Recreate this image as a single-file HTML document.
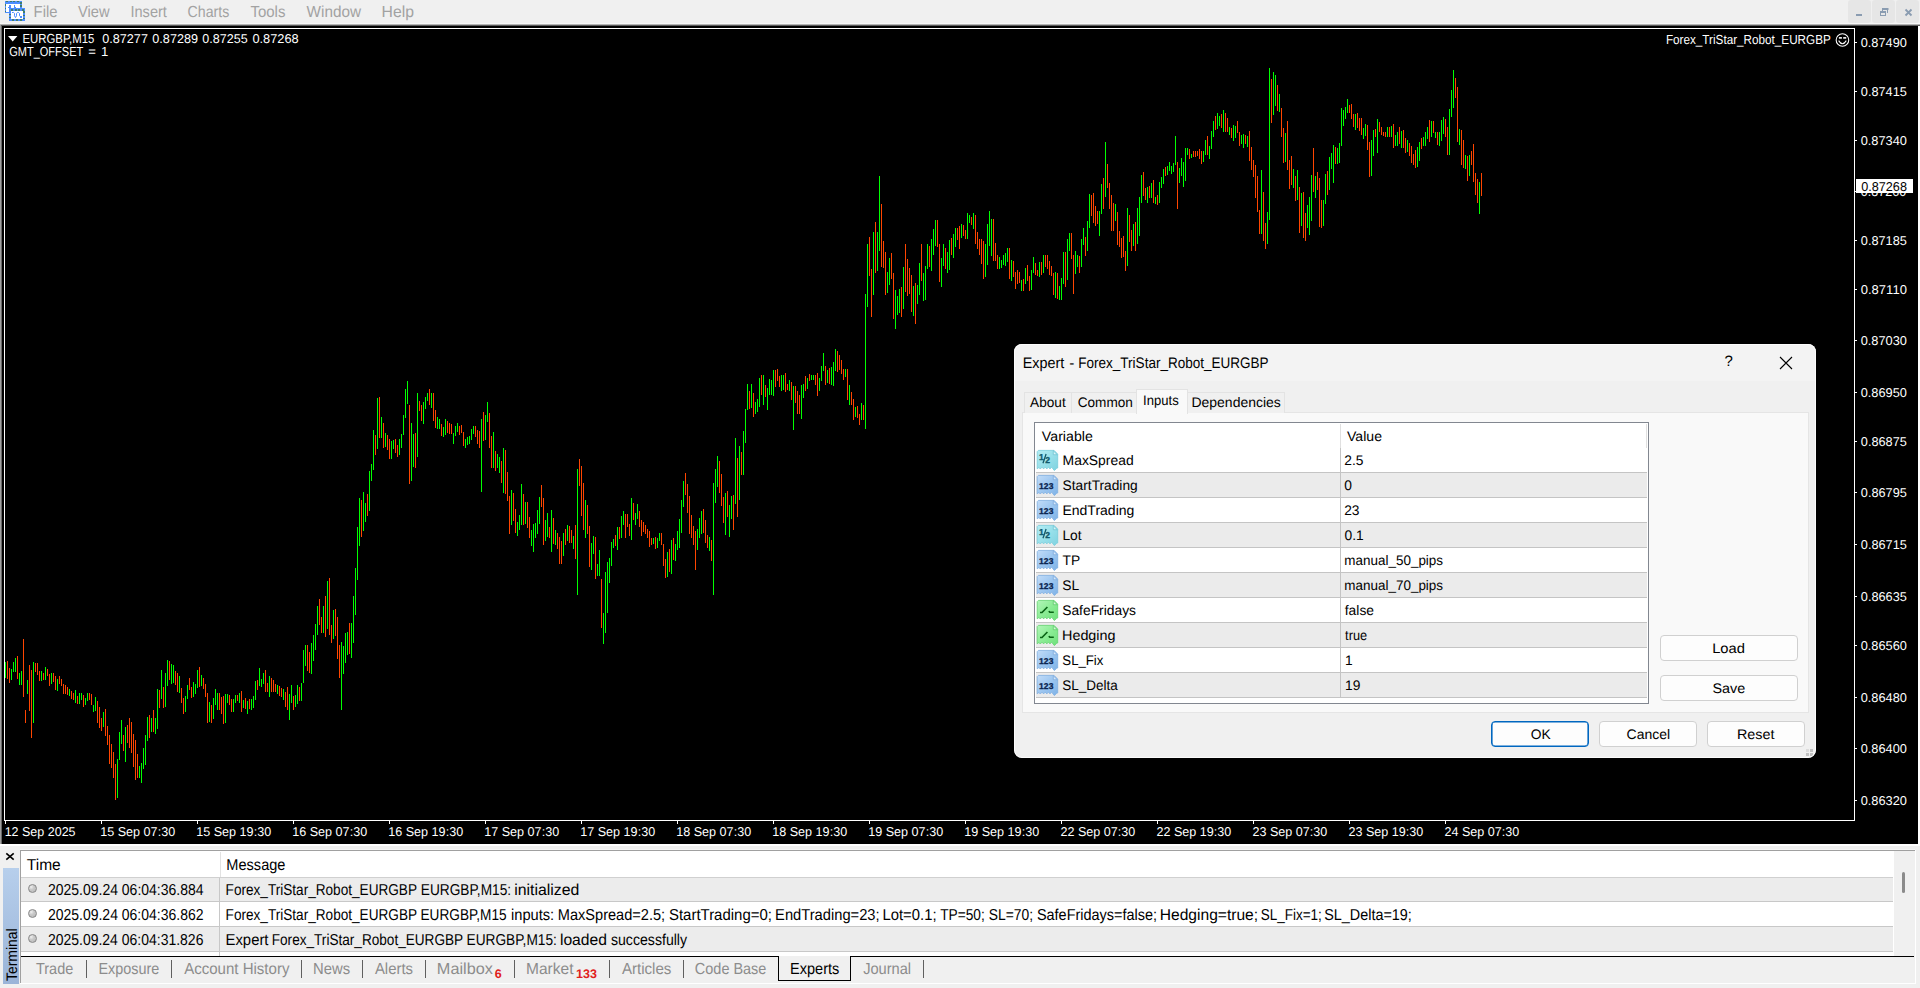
<!DOCTYPE html>
<html><head><meta charset="utf-8"><title>MetaTrader 4</title>
<style>
*{box-sizing:border-box;margin:0;padding:0}
html,body{width:1920px;height:988px;overflow:hidden;background:#f0f0f0;font-family:"Liberation Sans",sans-serif;text-rendering:geometricPrecision}
.a{position:absolute;white-space:nowrap}
#menubar{left:0;top:0;width:1920px;height:23px;background:#f0f0f0}
.mi{top:1.5px;height:20px;line-height:20px;font-size:16px;color:#a2a2a2}
.wc{top:0;width:23px;height:23px;background:#e6e6e6}
#chartbg{left:2px;top:26px;width:1916px;height:818px;background:#000}
#frame{left:4px;top:28px;width:1851px;height:793px;border:1px solid #fff}
.ct{color:#fff;font-size:13.1px;line-height:14px}
.cd{font-size:12.8px}
.pl{left:1861px;color:#fff;font-size:12.8px;line-height:14px}
.tick{left:1855px;width:2px;height:1px;background:#fff}
.tl{top:824.57px;color:#fff;font-size:12.8px;line-height:14px}
.tt{top:821px;width:1px;height:3px;background:#fff}
/* terminal */
#term{left:20px;top:850px;width:1895px;height:106px;background:#fff;border-top:1px solid #a0a0a0;border-left:1px solid #a0a0a0}
.trow{left:21px;width:1872px;height:25px;border-bottom:1px solid #c8c8c8}
.tx{font-size:15.8px;line-height:24px;color:#000;height:24px}
.tab{top:958.55px;height:20px;line-height:20px;font-size:16px;color:#8c8c8c}
.tsep{top:960px;width:1px;height:18px;background:#606060}
/* dialog */
#dlg{left:1014px;top:344px;width:802px;height:414px;background:#f0f0f0;border-radius:8px;overflow:hidden}
#dlgtitle{left:0;top:0;width:802px;height:37px;background:#f3f3f3}
.dt{font-size:14px;color:#000;line-height:16px}
.dtab{top:48px;height:21px;background:#f0f0f0;border:1px solid #e3e3e3;border-bottom:none;font-size:14px;line-height:19px;text-align:center}
.btn{height:26px;border:1px solid #d0d0d0;border-radius:4px;background:#fdfdfd;font-size:14px;line-height:24px;text-align:center;color:#000}
.row{left:22px;width:611px;height:25px;border-bottom:1px solid #c4c4c4}
.rowg{background:#ebebeb}
.rt{font-size:13.8px;line-height:16px;color:#000}
.rw{font-size:13.8px}
</style></head><body>
<style>#m1{transform-origin:0 0;transform:translate(-0.38px,1.10px) scaleX(0.9238)}
#m2{transform-origin:0 0;transform:translate(-0.03px,1.10px) scaleX(0.9166)}
#m3{transform-origin:0 0;transform:translate(-0.52px,1.10px) scaleX(0.9098)}
#m4{transform-origin:0 0;transform:translate(-0.40px,1.10px) scaleX(0.8835)}
#m5{transform-origin:0 0;transform:translate(0.42px,1.10px) scaleX(0.9356)}
#m6{transform-origin:0 0;transform:translate(0.61px,1.10px) scaleX(0.9554)}
#m7{transform-origin:0 0;transform:translate(-0.50px,1.10px) scaleX(0.9854)}
#c3{transform-origin:0 0;transform:translate(-1.11px,0.30px) scaleX(0.8945)}
#th1{transform-origin:0 0;transform:translate(-0.21px,0.90px) scaleX(0.9836)}
#th2{transform-origin:0 0;transform:translate(-0.67px,0.90px) scaleX(0.9221)}
#r1a{transform-origin:0 0;transform:translate(-0.08px,1.80px) scaleX(0.8856)}
#r2a{transform-origin:0 0;transform:translate(-0.08px,1.80px) scaleX(0.8855)}
#r3a{transform-origin:0 0;transform:translate(-0.08px,1.80px) scaleX(0.8851)}
#t1{transform-origin:0 0;transform:translate(-0.01px,1.10px) scaleX(0.9040)}
#t2{transform-origin:0 0;transform:translate(-0.56px,1.10px) scaleX(0.8993)}
#t3{transform-origin:0 0;transform:translate(0.14px,1.10px) scaleX(0.9395)}
#t4{transform-origin:0 0;transform:translate(-0.88px,1.10px) scaleX(0.9248)}
#t5{transform-origin:0 0;transform:translate(-0.08px,1.10px) scaleX(0.9307)}
#t6{transform-origin:0 0;transform:translate(-1.13px,1.10px) scaleX(1.0144)}
#t6n{transform-origin:0 0;transform:translate(-0.15px,1.10px) scaleX(1.0000)}
#t7{transform-origin:0 0;transform:translate(-0.94px,1.10px) scaleX(0.9694)}
#t7n{transform-origin:0 0;transform:translate(-0.89px,1.10px) scaleX(1.0000)}
#t8{transform-origin:0 0;transform:translate(-0.06px,1.10px) scaleX(0.9430)}
#t9{transform-origin:0 0;transform:translate(-1.14px,1.10px) scaleX(0.9036)}
#t10{transform-origin:0 0;transform:translate(-0.93px,1.10px) scaleX(0.9071)}
#t11{transform-origin:0 0;transform:translate(-0.86px,1.10px) scaleX(0.9140)}
#dt1{transform-origin:0 0;transform:translate(0.07px,0.60px) scaleX(0.9894)}
#dt2{transform-origin:0 0;transform:translate(-0.31px,0.60px) scaleX(0.9857)}
#dt3{transform-origin:0 0;transform:translate(-0.91px,0.60px) scaleX(0.9465)}
#dt4{transform-origin:0 0;transform:translate(-0.54px,0.60px) scaleX(1.0126)}
#lh1{transform-origin:0 0;transform:translate(-0.17px,1.10px) scaleX(1.0288)}
#lh2{transform-origin:0 0;transform:translate(-0.01px,1.10px) scaleX(1.0206)}
#b1{transform-origin:0 0;transform:translate(-0.83px,0.75px) scaleX(1.0681)}
#b2{transform-origin:0 0;transform:translate(-0.59px,0.75px) scaleX(1.0428)}
#b3{transform-origin:0 0;transform:translate(-0.32px,0.75px) scaleX(1.0000)}
#b4{transform-origin:0 0;transform:translate(-0.44px,0.75px) scaleX(1.0151)}
#b5{transform-origin:0 0;transform:translate(-1.12px,0.75px) scaleX(1.0423)}
#rn0{transform-origin:0 0;transform:translate(-0.39px,0.80px) scaleX(1.0063)}
#rn1{transform-origin:0 0;transform:translate(-0.39px,0.80px) scaleX(0.9959)}
#rn2{transform-origin:0 0;transform:translate(-0.58px,0.80px) scaleX(1.0158)}
#rn3{transform-origin:0 0;transform:translate(-0.60px,0.80px) scaleX(1.0000)}
#rn4{transform-origin:0 0;transform:translate(-0.45px,0.80px) scaleX(1.0000)}
#rn5{transform-origin:0 0;transform:translate(-0.73px,0.80px) scaleX(1.0000)}
#rn6{transform-origin:0 0;transform:translate(-0.80px,0.80px) scaleX(1.0029)}
#rn7{transform-origin:0 0;transform:translate(-0.98px,0.80px) scaleX(1.0412)}
#rn8{transform-origin:0 0;transform:translate(-0.66px,0.80px) scaleX(0.9559)}
#rn9{transform-origin:0 0;transform:translate(-0.75px,0.80px) scaleX(0.9785)}
#rv0{transform-origin:0 0;transform:translate(-0.75px,0.80px) scaleX(1.0000)}
#rv1{transform-origin:0 0;transform:translate(-0.65px,0.80px) scaleX(1.0000)}
#rv2{transform-origin:0 0;transform:translate(-0.86px,0.80px) scaleX(1.0000)}
#rv3{transform-origin:0 0;transform:translate(-0.46px,0.80px) scaleX(1.0000)}
#rv4{transform-origin:0 0;transform:translate(-0.63px,0.80px) scaleX(0.9746)}
#rv5{transform-origin:0 0;transform:translate(-0.63px,0.80px) scaleX(0.9746)}
#rv6{transform-origin:0 0;transform:translate(-0.24px,0.80px) scaleX(1.0036)}
#rv7{transform-origin:0 0;transform:translate(0.11px,0.80px) scaleX(0.9256)}
#rv8{transform-origin:0 0;transform:translate(0.11px,0.80px) scaleX(1.0000)}
#rv9{transform-origin:0 0;transform:translate(0.11px,0.80px) scaleX(1.0000)}
#p0{transform-origin:0 0;transform:translate(-0.30px,0.00px) scaleX(0.9992)}
#p1{transform-origin:0 0;transform:translate(-0.19px,0.00px) scaleX(0.9958)}
#p2{transform-origin:0 0;transform:translate(-0.35px,0.00px) scaleX(1.0005)}
#p3{transform-origin:0 0;transform:translate(-0.13px,0.00px) scaleX(0.9782)}
#p4{transform-origin:0 0;transform:translate(-0.19px,0.00px) scaleX(0.9958)}
#p5{transform-origin:0 0;transform:translate(-0.24px,0.00px) scaleX(1.0179)}
#p6{transform-origin:0 0;transform:translate(-0.35px,0.00px) scaleX(1.0005)}
#p7{transform-origin:0 0;transform:translate(-0.30px,0.00px) scaleX(0.9991)}
#p8{transform-origin:0 0;transform:translate(-0.16px,0.00px) scaleX(0.9945)}
#p9{transform-origin:0 0;transform:translate(-0.16px,0.00px) scaleX(0.9946)}
#p10{transform-origin:0 0;transform:translate(-0.19px,0.00px) scaleX(0.9958)}
#p11{transform-origin:0 0;transform:translate(-0.19px,0.00px) scaleX(0.9958)}
#p12{transform-origin:0 0;transform:translate(-0.30px,0.00px) scaleX(0.9991)}
#p13{transform-origin:0 0;transform:translate(-0.30px,0.00px) scaleX(0.9992)}
#p14{transform-origin:0 0;transform:translate(-0.30px,0.00px) scaleX(0.9992)}
#p15{transform-origin:0 0;transform:translate(-0.35px,0.00px) scaleX(1.0005)}
#tm0{transform-origin:0 0;transform:translate(-0.34px,-0.20px) scaleX(0.9768)}
#tm1{transform-origin:0 0;transform:translate(-0.83px,-0.20px) scaleX(0.9848)}
#tm2{transform-origin:0 0;transform:translate(-0.83px,-0.20px) scaleX(0.9848)}
#tm3{transform-origin:0 0;transform:translate(-0.83px,-0.20px) scaleX(0.9848)}
#tm4{transform-origin:0 0;transform:translate(-0.83px,-0.20px) scaleX(0.9848)}
#tm5{transform-origin:0 0;transform:translate(-0.83px,-0.20px) scaleX(0.9848)}
#tm6{transform-origin:0 0;transform:translate(-0.83px,-0.20px) scaleX(0.9848)}
#tm7{transform-origin:0 0;transform:translate(-0.83px,-0.20px) scaleX(0.9848)}
#tm8{transform-origin:0 0;transform:translate(-0.83px,-0.20px) scaleX(0.9848)}
#tm9{transform-origin:0 0;transform:translate(-0.83px,-0.20px) scaleX(0.9848)}
#tm10{transform-origin:0 0;transform:translate(-0.83px,-0.20px) scaleX(0.9848)}
#tm11{transform-origin:0 0;transform:translate(-0.60px,-0.20px) scaleX(0.9825)}
#tm12{transform-origin:0 0;transform:translate(-0.60px,-0.20px) scaleX(0.9825)}
#tm13{transform-origin:0 0;transform:translate(-0.60px,-0.20px) scaleX(0.9825)}
#tm14{transform-origin:0 0;transform:translate(-0.60px,-0.20px) scaleX(0.9825)}
#tm15{transform-origin:0 0;transform:translate(-0.60px,-0.20px) scaleX(0.9825)}
#pc{transform-origin:0 0;transform:translate(0.16px,0.00px) scaleX(0.9895)}
#c1a{transform-origin:0 0;transform:translate(-0.53px,0.00px) scaleX(0.8688)}
#c1b{transform-origin:0 0;transform:translate(0.19px,0.00px) scaleX(0.9884)}
#c1c{transform-origin:0 0;transform:translate(0.28px,0.00px) scaleX(0.9892)}
#c1d{transform-origin:0 0;transform:translate(0.30px,0.00px) scaleX(0.9796)}
#c1e{transform-origin:0 0;transform:translate(0.38px,0.00px) scaleX(1.0023)}
#c2a{transform-origin:0 0;transform:translate(0.15px,0.10px) scaleX(0.8422)}
#c2b{transform-origin:0 0;transform:translate(0.33px,0.10px) scaleX(1.0000)}
#c2c{transform-origin:0 0;transform:translate(0.12px,0.10px) scaleX(1.0000)}
#r1b0{transform-origin:0 0;transform:translate(-0.40px,1.80px) scaleX(0.8605)}
#r1b1{transform-origin:0 0;transform:translate(-1.18px,1.80px) scaleX(0.8666)}
#r1b2{transform-origin:0 0;transform:translate(-0.85px,1.80px) scaleX(1.0027)}
#r2b0{transform-origin:0 0;transform:translate(-0.39px,1.80px) scaleX(0.8607)}
#r2b1{transform-origin:0 0;transform:translate(-0.47px,1.80px) scaleX(0.8621)}
#r2b2{transform-origin:0 0;transform:translate(-0.97px,1.80px) scaleX(0.9273)}
#r2b3{transform-origin:0 0;transform:translate(-1.21px,1.80px) scaleX(0.9227)}
#r2b4{transform-origin:0 0;transform:translate(-1.06px,1.80px) scaleX(0.9474)}
#r2b5{transform-origin:0 0;transform:translate(-0.90px,1.80px) scaleX(0.9307)}
#r2b6{transform-origin:0 0;transform:translate(-0.50px,1.80px) scaleX(0.9388)}
#r2b7{transform-origin:0 0;transform:translate(0.17px,1.80px) scaleX(0.8671)}
#r2b8{transform-origin:0 0;transform:translate(-0.20px,1.80px) scaleX(0.8772)}
#r2b9{transform-origin:0 0;transform:translate(-0.10px,1.80px) scaleX(0.9151)}
#r2b10{transform-origin:0 0;transform:translate(-1.24px,1.80px) scaleX(0.9868)}
#r2b11{transform-origin:0 0;transform:translate(-0.37px,1.80px) scaleX(0.8542)}
#r2b12{transform-origin:0 0;transform:translate(-0.78px,1.80px) scaleX(0.9109)}
#r3b0{transform-origin:0 0;transform:translate(-0.48px,1.80px) scaleX(0.9408)}
#r3b1{transform-origin:0 0;transform:translate(-0.24px,1.80px) scaleX(0.8604)}
#r3b2{transform-origin:0 0;transform:translate(-0.49px,1.80px) scaleX(0.8675)}
#r3b3{transform-origin:0 0;transform:translate(-0.10px,1.80px) scaleX(0.9917)}
#r3b4{transform-origin:0 0;transform:translate(-0.08px,1.80px) scaleX(0.8943)}
#d0a{transform-origin:0 0;transform:translate(-0.20px,0.60px) scaleX(0.9383)}
#d0b{transform-origin:0 0;transform:translate(-0.78px,0.60px) scaleX(1.0000)}
#d0c{transform-origin:0 0;transform:translate(-0.72px,0.60px) scaleX(0.8837)}
</style>
<svg width="0" height="0" style="position:absolute">
<defs>
<linearGradient id="gi" x1="0" y1="0" x2="1" y2="1"><stop offset="0" stop-color="#c2dcf8"/><stop offset=".5" stop-color="#9cc6f0"/><stop offset="1" stop-color="#7eb2e6"/></linearGradient>
<linearGradient id="gh" x1="0" y1="0" x2="1" y2="1"><stop offset="0" stop-color="#b4edf4"/><stop offset=".5" stop-color="#98e0ea"/><stop offset="1" stop-color="#7fd2e0"/></linearGradient>
<linearGradient id="gb" x1="0" y1="0" x2="1" y2="1"><stop offset="0" stop-color="#b2f6b8"/><stop offset=".5" stop-color="#8aec94"/><stop offset="1" stop-color="#6ee07a"/></linearGradient>
<symbol id="pg" viewBox="0 0 24 24"><path d="M1.2 2.6L2.4 1.4H18.1L21.7 5.1V19L20.8 19.1L18.4 21.6L15.6 18.1L14 19.9L12.4 18.1L10.8 19.9L9.2 18.1L7.6 19.9L6 18.1L4.3 20L2.9 18.5L1.2 19.8Z"/></symbol>
<symbol id="ic_i" viewBox="0 0 24 24"><use href="#pg" fill="url(#gi)" stroke="#86b2e2" stroke-width=".9"/><path d="M17.3 1.8V5.7H21.3Z" fill="#d6e8fa" stroke="#78a6da" stroke-width=".7"/><text x="3" y="15.1" font-family="Liberation Sans" font-weight="bold" font-size="8.5" fill="#0b2550" stroke="#0b2550" stroke-width=".3" letter-spacing=".1">123</text></symbol>
<symbol id="ic_h" viewBox="0 0 24 24"><use href="#pg" fill="url(#gh)" stroke="#7fcfdd" stroke-width=".9"/><path d="M17.3 1.8V5.7H21.3Z" fill="#d8f5f8" stroke="#68c0d0" stroke-width=".7"/><g fill="#125a6c" stroke="#125a6c" font-family="Liberation Sans" font-weight="bold" font-size="8.6"><text x="3" y="11.4" stroke-width=".3">1</text><text x="9.2" y="14.3" stroke-width=".3">2</text><path d="M10.1 5L7 14.2" stroke-width="1.3" fill="none"/></g></symbol>
<symbol id="ic_b" viewBox="0 0 24 24"><use href="#pg" fill="url(#gb)" stroke="#6cd678" stroke-width=".9"/><path d="M17.3 1.8V5.7H21.3Z" fill="#d4fad8" stroke="#58c464" stroke-width=".7"/><path d="M4 13.5H6L11.4 8" fill="none" stroke="#0a6416" stroke-width="1.7" stroke-linejoin="round"/><path d="M13 12L13.6 13.2H17.8" fill="none" stroke="#0a6416" stroke-width="1.6" stroke-linejoin="round"/></symbol>
</defs></svg>

<!-- menu bar -->
<div class="a" id="menubar"></div>
<svg class="a" style="left:4px;top:0" width="22" height="22" viewBox="0 0 22 22" shape-rendering="crispEdges">
<rect x="1" y="1" width="17" height="12" fill="#4d8dff"/><rect x="2" y="4" width="14" height="8" fill="#fff"/>
<path d="M2 1.5H16" stroke="#3f7d6c" stroke-width="1" stroke-dasharray="2 1.5"/><path d="M17 2V10" stroke="#3f7d6c" stroke-width="2" stroke-dasharray="1.6 1.6"/><path d="M1.5 4V12" stroke="#3f7d6c" stroke-width="1" stroke-dasharray="1.5 2"/>
<path d="M5.9 5V9M4 7.3H6M10.5 5V8.5M10.5 7.4H12" stroke="#4d8dff" stroke-width="1.6" fill="none"/>
<rect x="5" y="8" width="16" height="13" fill="#4d8dff"/><rect x="7" y="11" width="12" height="8" fill="#fff"/>
<path d="M7 9.5H21" stroke="#3f7d6c" stroke-width="2" stroke-dasharray="2 1.6"/><path d="M20 11V19" stroke="#3f7d6c" stroke-width="2" stroke-dasharray="1.8 1.8"/><path d="M6 14V19" stroke="#3f7d6c" stroke-width="2" stroke-dasharray="1.2 2"/><path d="M8 20H20" stroke="#3f7d6c" stroke-width="2" stroke-dasharray="2 2.2"/>
<path d="M8 12.5H9.6L10.5 13.4V15.8L11.5 17.6L12.5 15.8V13.4L13.6 12.5H14.6L15.5 13.4V15.8L16.4 16.6" stroke="#4d8dff" stroke-width="1" fill="none" shape-rendering="auto"/><rect x="16.2" y="16" width="1.8" height="1.8" fill="#4d8dff"/>
</svg>
<div class="a mi" id="m1" style="left:34px">File</div>
<div class="a mi" id="m2" style="left:78px">View</div>
<div class="a mi" id="m3" style="left:131px">Insert</div>
<div class="a mi" id="m4" style="left:188px">Charts</div>
<div class="a mi" id="m5" style="left:250px">Tools</div>
<div class="a mi" id="m6" style="left:306px">Window</div>
<div class="a mi" id="m7" style="left:382px">Help</div>
<div class="a wc" style="left:1848px;border-radius:3px"></div>
<div class="a wc" style="left:1872px;border-radius:3px"></div>
<div class="a wc" style="left:1896px;border-radius:3px"></div>
<svg class="a" style="left:1848px;top:0" width="72" height="23" viewBox="0 0 72 23" fill="none" stroke="#8a9cb1">
<path d="M8 15H14" stroke-width="2"/>
<path d="M34.5 11V8.5H39.5V13" stroke-width="1"/><path d="M34 9H40.5" stroke-width="2"/>
<rect x="32.5" y="11.5" width="5" height="4" stroke-width="1"/><path d="M32 12H38" stroke-width="2"/>
<path d="M57.5 9.5L63.5 15.5M63.5 9.5L57.5 15.5" stroke-width="1.8"/>
</svg>
<div class="a" style="left:0;top:23px;width:1920px;height:1px;background:#f7f7f7"></div>
<div class="a" style="left:0;top:24px;width:1920px;height:1px;background:#b4b4b4"></div>
<div class="a" style="left:0;top:25px;width:1920px;height:1px;background:#5a5a5a"></div>
<div class="a" style="left:0;top:25px;width:1px;height:819px;background:#a0a0a0"></div>
<div class="a" style="left:1px;top:26px;width:1px;height:818px;background:#696969"></div>

<!-- chart -->
<div class="a" id="chartbg"></div>
<div class="a" id="frame"></div>
<svg class="a" style="left:0;top:0" width="1920" height="845" viewBox="0 0 1920 845" shape-rendering="crispEdges" fill="none" stroke-width="1">
<path stroke="#00ff00" d="M5.5 662V678M11.5 669V680M13.5 662V672M15.5 658V672M19.5 673V685M21.5 671V685M27.5 680V694M33.5 662V723M41.5 671V681M45.5 667V680M51.5 673V684M57.5 679V691M69.5 689V696M75.5 690V703M79.5 693V704M81.5 693V700M85.5 698V705M87.5 693V701M93.5 705V712M95.5 697V711M103.5 712V727M117.5 759V798M119.5 732V760M121.5 720V744M125.5 727V762M139.5 766V778M141.5 763V783M143.5 748V769M145.5 735V765M147.5 717V741M151.5 718V732M155.5 718V734M157.5 689V729M161.5 670V699M165.5 673V707M167.5 660V686M171.5 664V684M173.5 665V683M179.5 676V693M185.5 696V712M187.5 685V699M193.5 682V697M195.5 684V694M197.5 670V688M201.5 675V686M209.5 702V722M213.5 698V719M215.5 689V705M217.5 693V710M225.5 694V723M227.5 694V703M233.5 699V712M235.5 695V703M239.5 693V703M243.5 700V708M247.5 701V714M251.5 699V710M253.5 696V708M255.5 681V700M259.5 668V686M261.5 679V687M263.5 673V684M269.5 676V697M277.5 685V694M283.5 689V700M289.5 694V720M291.5 685V703M295.5 695V707M297.5 685V704M301.5 683V701M303.5 650V683M305.5 645V666M311.5 643V674M313.5 635V661M315.5 624V650M317.5 606V635M323.5 606V633M327.5 581V629M333.5 610V639M341.5 642V710M343.5 646V674M345.5 633V663M347.5 632V655M351.5 623V658M353.5 596V643M355.5 568V615M357.5 527V580M359.5 498V546M363.5 492V531M365.5 503V522M369.5 471V511M371.5 464V481M373.5 430V470M377.5 398V449M381.5 417V438M385.5 433V447M391.5 441V459M393.5 440V449M399.5 439V455M401.5 434V448M403.5 415V435M405.5 389V418M407.5 381V404M411.5 423V481M413.5 434V467M417.5 393V457M423.5 402V424M425.5 397V409M427.5 393V401M431.5 393V408M437.5 417V429M439.5 419V429M443.5 427V437M445.5 419V435M453.5 433V444M455.5 426V436M457.5 423V432M465.5 439V448M467.5 437V445M469.5 436V444M471.5 429V440M473.5 426V434M481.5 419V492M485.5 415V440M487.5 402V422M493.5 432V468M497.5 454V468M499.5 457V473M503.5 448V493M511.5 490V525M517.5 522V536M519.5 515V530M521.5 484V525M525.5 502V524M531.5 530V546M533.5 524V552M535.5 523V538M537.5 510V534M539.5 497V524M545.5 520V541M547.5 513V537M551.5 510V552M555.5 530V545M563.5 533V556M567.5 525V541M573.5 536V549M577.5 469V595M585.5 500V538M591.5 543V570M593.5 536V554M597.5 564V576M599.5 550V576M603.5 613V644M605.5 572V633M607.5 562V613M609.5 558V583M611.5 542V566M613.5 539V548M617.5 527V550M621.5 516V538M623.5 511V525M631.5 498V540M635.5 513V525M637.5 504V519M653.5 538V544M657.5 538V548M659.5 533V541M667.5 552V577M671.5 540V574M675.5 544V561M677.5 531V550M679.5 519V548M681.5 500V533M683.5 481V507M697.5 529V550M699.5 518V538M701.5 511V534M709.5 537V551M713.5 483V595M715.5 469V503M717.5 456V487M725.5 493V535M729.5 505V537M731.5 496V519M735.5 438V504M739.5 446V500M743.5 431V475M745.5 409V443M747.5 384V410M751.5 384V408M755.5 402V414M757.5 399V412M759.5 378V407M763.5 375V405M767.5 388V410M769.5 379V395M771.5 380V395M773.5 370V396M781.5 375V391M783.5 375V390M789.5 380V391M793.5 386V430M801.5 385V419M803.5 384V398M807.5 378V389M811.5 375V380M813.5 375V380M819.5 378V391M821.5 366V381M823.5 353V371M827.5 370V383M831.5 367V385M833.5 362V386M835.5 349V371M845.5 369V377M849.5 385V405M855.5 407V417M861.5 403V420M865.5 294V429M867.5 244V307M873.5 232V295M877.5 232V271M879.5 176V251M887.5 272V293M889.5 258V285M895.5 290V329M897.5 296V315M899.5 289V313M903.5 267V309M913.5 286V316M917.5 285V304M919.5 263V295M923.5 273V301M925.5 266V300M927.5 244V269M931.5 239V271M933.5 229V255M935.5 220V246M941.5 258V287M943.5 244V266M947.5 252V273M949.5 240V270M953.5 234V258M955.5 228V247M961.5 224V238M967.5 213V239M969.5 215V223M973.5 213V229M985.5 244V277M987.5 224V265M989.5 211V246M991.5 219V256M999.5 257V269M1001.5 260V268M1003.5 255V265M1005.5 253V266M1007.5 248V262M1011.5 260V281M1021.5 280V291M1025.5 268V284M1031.5 270V290M1033.5 257V273M1039.5 262V277M1043.5 255V273M1055.5 272V298M1059.5 286V300M1061.5 278V300M1063.5 252V284M1067.5 239V280M1069.5 233V251M1075.5 251V274M1077.5 255V267M1081.5 239V267M1083.5 228V245M1087.5 221V251M1089.5 194V228M1099.5 211V236M1101.5 184V214M1105.5 142V197M1115.5 204V221M1127.5 208V266M1133.5 224V246M1137.5 208V244M1139.5 197V236M1141.5 175V203M1147.5 187V203M1151.5 183V198M1155.5 197V204M1159.5 182V203M1161.5 177V188M1163.5 169V184M1167.5 166V175M1169.5 162V171M1171.5 166V174M1173.5 163V172M1175.5 136V165M1179.5 168V183M1181.5 158V176M1183.5 162V187M1185.5 148V181M1187.5 148V155M1191.5 154V158M1203.5 151V162M1205.5 140V155M1209.5 146V159M1211.5 131V149M1213.5 121V137M1217.5 113V129M1219.5 116V126M1223.5 110V132M1229.5 127V135M1233.5 125V141M1235.5 126V138M1241.5 135V144M1243.5 134V148M1247.5 136V147M1261.5 170V234M1267.5 212V244M1269.5 68V220M1273.5 72V115M1275.5 75V106M1279.5 94V112M1285.5 133V162M1293.5 169V188M1297.5 170V200M1301.5 193V226M1307.5 205V228M1309.5 197V235M1311.5 175V221M1315.5 176V198M1323.5 200V226M1325.5 174V204M1329.5 157V190M1331.5 153V169M1333.5 145V183M1337.5 148V164M1339.5 143V163M1341.5 108V146M1343.5 110V126M1345.5 107V119M1347.5 99V113M1355.5 114V130M1363.5 128V139M1365.5 124V136M1371.5 140V176M1373.5 130V156M1377.5 119V153M1387.5 127V137M1391.5 126V137M1395.5 135V146M1397.5 132V146M1401.5 131V148M1407.5 140V152M1417.5 147V167M1419.5 142V161M1423.5 137V146M1425.5 132V146M1427.5 127V139M1431.5 121V137M1435.5 132V138M1439.5 132V146M1441.5 120V141M1443.5 117V134M1449.5 109V155M1451.5 90V117M1453.5 70V108M1459.5 129V145M1465.5 155V169M1469.5 155V176M1479.5 182V214"/>
<path stroke="#ff4500" d="M7.5 661V679M9.5 668V683M17.5 656V679M23.5 639V697M25.5 710V723M29.5 665V711M31.5 670V738M35.5 663V672M37.5 663V675M39.5 671V681M43.5 673V680M47.5 669V676M49.5 674V686M53.5 673V682M55.5 676V690M59.5 676V684M61.5 679V686M63.5 684V694M65.5 685V694M67.5 687V695M71.5 691V699M73.5 693V700M77.5 696V704M83.5 695V707M89.5 693V700M91.5 694V705M97.5 701V723M99.5 707V728M101.5 718V731M105.5 709V736M107.5 726V745M109.5 735V764M111.5 744V768M113.5 752V778M115.5 764V800M123.5 735V751M127.5 725V743M129.5 718V748M131.5 722V753M133.5 734V767M135.5 740V780M137.5 754V778M149.5 715V738M153.5 710V732M159.5 690V708M163.5 687V708M169.5 661V680M175.5 671V685M177.5 673V692M181.5 688V703M183.5 698V714M189.5 678V690M191.5 687V698M199.5 667V687M203.5 678V689M205.5 684V697M207.5 693V723M211.5 705V723M219.5 693V710M221.5 697V714M223.5 696V724M229.5 695V705M231.5 699V712M237.5 695V701M241.5 691V712M245.5 698V709M249.5 699V709M257.5 680V690M265.5 670V692M267.5 683V692M271.5 678V692M273.5 680V692M275.5 684V692M279.5 686V696M281.5 688V697M285.5 692V707M287.5 687V710M293.5 696V710M299.5 687V701M307.5 645V671M309.5 652V673M319.5 599V625M321.5 617V633M325.5 596V637M329.5 578V635M331.5 625V643M335.5 609V636M337.5 617V659M339.5 645V678M349.5 623V654M361.5 500V537M367.5 494V516M375.5 435V455M379.5 397V438M383.5 423V448M387.5 435V450M389.5 439V459M395.5 439V453M397.5 445V457M409.5 405V484M415.5 433V468M419.5 401V411M421.5 405V421M429.5 389V405M433.5 393V421M435.5 410V428M441.5 424V436M447.5 421V433M449.5 423V434M451.5 424V434M459.5 426V435M461.5 425V433M463.5 432V446M475.5 426V437M477.5 430V444M479.5 431V448M483.5 412V441M489.5 413V448M491.5 436V468M495.5 451V471M501.5 461V483M505.5 450V494M507.5 472V501M509.5 496V534M513.5 493V521M515.5 509V533M523.5 494V525M527.5 502V528M529.5 517V538M541.5 485V507M543.5 498V545M549.5 527V538M553.5 518V544M557.5 533V549M559.5 537V564M561.5 541V564M565.5 529V545M569.5 526V543M571.5 530V543M575.5 525V559M579.5 459V486M581.5 466V516M583.5 483V530M587.5 505V534M589.5 526V567M595.5 537V579M601.5 579V628M615.5 535V546M619.5 527V539M625.5 514V538M627.5 514V527M629.5 524V536M633.5 503V520M639.5 511V527M641.5 520V536M643.5 522V532M645.5 525V534M647.5 529V538M649.5 531V547M651.5 538V545M655.5 537V549M661.5 533V545M663.5 544V566M665.5 559V578M669.5 549V572M673.5 538V560M685.5 473V495M687.5 484V513M689.5 496V534M691.5 515V538M693.5 526V545M695.5 531V570M703.5 509V533M705.5 520V543M707.5 535V548M711.5 540V561M719.5 461V493M721.5 474V506M723.5 497V523M727.5 491V517M733.5 495V530M737.5 458V517M741.5 452V475M749.5 391V409M753.5 393V417M761.5 375V395M765.5 385V397M775.5 370V387M777.5 369V381M779.5 376V387M785.5 373V392M787.5 384V390M791.5 382V400M795.5 386V403M797.5 391V414M799.5 395V414M805.5 376V391M809.5 374V381M815.5 375V385M817.5 373V396M825.5 366V385M829.5 368V384M837.5 351V372M839.5 355V370M841.5 360V374M843.5 369V380M847.5 369V400M851.5 392V405M853.5 399V420M857.5 406V418M859.5 414V425M863.5 405V420M869.5 237V276M871.5 269V317M875.5 222V273M881.5 204V267M883.5 241V268M885.5 252V295M891.5 253V279M893.5 273V319M901.5 287V317M905.5 244V292M907.5 259V296M909.5 268V294M911.5 275V312M915.5 283V324M921.5 244V281M929.5 246V267M937.5 220V247M939.5 244V282M945.5 248V269M951.5 238V255M957.5 228V240M959.5 226V249M963.5 225V236M965.5 230V239M971.5 217V225M975.5 215V244M977.5 232V249M979.5 239V255M981.5 239V264M983.5 241V279M993.5 219V261M995.5 243V261M997.5 255V269M1009.5 248V279M1013.5 261V277M1015.5 272V289M1017.5 270V284M1019.5 272V283M1023.5 279V291M1027.5 265V281M1029.5 276V291M1035.5 263V275M1037.5 270V276M1041.5 262V275M1045.5 255V267M1047.5 255V269M1049.5 261V275M1051.5 266V276M1053.5 273V295M1057.5 273V299M1065.5 252V287M1071.5 233V259M1073.5 255V294M1079.5 256V273M1085.5 237V256M1091.5 195V216M1093.5 193V223M1095.5 206V226M1097.5 211V224M1103.5 178V209M1107.5 164V188M1109.5 183V209M1111.5 195V231M1113.5 203V231M1117.5 212V245M1119.5 231V247M1121.5 238V258M1123.5 236V257M1125.5 251V271M1129.5 215V242M1131.5 230V251M1135.5 222V251M1143.5 172V196M1145.5 188V200M1149.5 186V198M1153.5 180V203M1157.5 195V205M1165.5 167V176M1177.5 162V209M1189.5 149V159M1193.5 151V157M1195.5 151V157M1197.5 151V156M1199.5 149V159M1201.5 151V164M1207.5 136V155M1215.5 116V130M1221.5 114V128M1225.5 113V132M1227.5 118V132M1231.5 128V138M1237.5 121V133M1239.5 132V146M1245.5 135V144M1249.5 131V161M1251.5 147V170M1253.5 160V177M1255.5 165V198M1257.5 176V212M1259.5 210V234M1263.5 192V241M1265.5 223V249M1271.5 79V123M1277.5 85V111M1281.5 108V137M1283.5 128V163M1287.5 121V170M1289.5 160V189M1291.5 156V185M1295.5 176V201M1299.5 187V233M1303.5 192V238M1305.5 213V241M1313.5 148V192M1317.5 172V190M1319.5 178V227M1321.5 200V228M1327.5 171V195M1335.5 147V164M1349.5 105V113M1351.5 104V119M1353.5 114V127M1357.5 113V128M1359.5 118V131M1361.5 118V135M1367.5 125V150M1369.5 142V177M1375.5 129V137M1379.5 122V132M1381.5 127V135M1383.5 132V136M1385.5 132V137M1389.5 127V137M1393.5 124V148M1399.5 127V144M1403.5 130V148M1405.5 138V153M1409.5 143V156M1411.5 146V163M1413.5 154V165M1415.5 150V168M1421.5 138V149M1429.5 120V142M1433.5 121V133M1437.5 132V145M1445.5 119V137M1447.5 127V155M1455.5 78V98M1457.5 87V142M1461.5 130V165M1463.5 140V168M1467.5 156V181M1471.5 151V165M1473.5 144V182M1475.5 173V195M1477.5 179V203M1481.5 173V196"/>
</svg>
<svg class="a" style="left:7px;top:34px" width="12" height="9"><path d="M1 2H10.4L5.7 7.4Z" fill="#fff"/></svg>
<div class="a ct" id="c1a" style="left:23px;top:31.5px">EURGBP,M15</div><div class="a ct cd" id="c1b" style="left:102px;top:31.55px">0.87277</div><div class="a ct cd" id="c1c" style="left:152px;top:31.55px">0.87289</div><div class="a ct cd" id="c1d" style="left:202px;top:31.55px">0.87255</div><div class="a ct cd" id="c1e" style="left:252px;top:31.55px">0.87268</div>
<div class="a ct" id="c2a" style="left:9px;top:44.6px">GMT_OFFSET</div><div class="a ct" id="c2b" style="left:88px;top:44.6px">=</div><div class="a ct" id="c2c" style="left:101px;top:44.6px">1</div>
<div class="a ct" id="c3" style="left:1667px;top:32.6px">Forex_TriStar_Robot_EURGBP</div>
<svg class="a" style="left:1834px;top:32px" width="17" height="17" viewBox="0 0 17 17" fill="none" stroke="#fff"><circle cx="8.45" cy="8" r="6.3" stroke-width="1.05"/><path d="M4.6 8.6Q8.45 14.8 12.3 8.6" stroke-width="1.05"/><rect x="4.9" y="5.1" width="3" height="1.6" fill="#fff" stroke="none"/><rect x="9.2" y="5.1" width="3" height="1.6" fill="#fff" stroke="none"/></svg>
<div class="a tick" style="top:42px"></div><div class="a pl" id="p0" style="top:35.6px">0.87490</div>
<div class="a tick" style="top:91px"></div><div class="a pl" id="p1" style="top:84.6px">0.87415</div>
<div class="a tick" style="top:140px"></div><div class="a pl" id="p2" style="top:133.6px">0.87340</div>
<div class="a tick" style="top:191px"></div><div class="a pl" id="p3" style="top:184.6px">0.87260</div>
<div class="a tick" style="top:240px"></div><div class="a pl" id="p4" style="top:233.6px">0.87185</div>
<div class="a tick" style="top:289px"></div><div class="a pl" id="p5" style="top:282.6px">0.87110</div>
<div class="a tick" style="top:340px"></div><div class="a pl" id="p6" style="top:333.6px">0.87030</div>
<div class="a tick" style="top:392px"></div><div class="a pl" id="p7" style="top:385.6px">0.86950</div>
<div class="a tick" style="top:441px"></div><div class="a pl" id="p8" style="top:434.6px">0.86875</div>
<div class="a tick" style="top:492px"></div><div class="a pl" id="p9" style="top:485.6px">0.86795</div>
<div class="a tick" style="top:544px"></div><div class="a pl" id="p10" style="top:537.6px">0.86715</div>
<div class="a tick" style="top:596px"></div><div class="a pl" id="p11" style="top:589.6px">0.86635</div>
<div class="a tick" style="top:645px"></div><div class="a pl" id="p12" style="top:638.6px">0.86560</div>
<div class="a tick" style="top:697px"></div><div class="a pl" id="p13" style="top:690.6px">0.86480</div>
<div class="a tick" style="top:748px"></div><div class="a pl" id="p14" style="top:741.6px">0.86400</div>
<div class="a tick" style="top:800px"></div><div class="a pl" id="p15" style="top:793.6px">0.86320</div>

<div class="a" style="left:1856px;top:179px;width:57px;height:14px;background:#fff"></div>
<div class="a pl" id="pc" style="top:179.7px;color:#000">0.87268</div>
<div class="a tt" style="left:5px"></div><div class="a tl" id="tm0" style="left:5px">12 Sep 2025</div>
<div class="a tt" style="left:101px"></div><div class="a tl" id="tm1" style="left:101px">15 Sep 07:30</div>
<div class="a tt" style="left:197px"></div><div class="a tl" id="tm2" style="left:197px">15 Sep 19:30</div>
<div class="a tt" style="left:293px"></div><div class="a tl" id="tm3" style="left:293px">16 Sep 07:30</div>
<div class="a tt" style="left:389px"></div><div class="a tl" id="tm4" style="left:389px">16 Sep 19:30</div>
<div class="a tt" style="left:485px"></div><div class="a tl" id="tm5" style="left:485px">17 Sep 07:30</div>
<div class="a tt" style="left:581px"></div><div class="a tl" id="tm6" style="left:581px">17 Sep 19:30</div>
<div class="a tt" style="left:677px"></div><div class="a tl" id="tm7" style="left:677px">18 Sep 07:30</div>
<div class="a tt" style="left:773px"></div><div class="a tl" id="tm8" style="left:773px">18 Sep 19:30</div>
<div class="a tt" style="left:869px"></div><div class="a tl" id="tm9" style="left:869px">19 Sep 07:30</div>
<div class="a tt" style="left:965px"></div><div class="a tl" id="tm10" style="left:965px">19 Sep 19:30</div>
<div class="a tt" style="left:1061px"></div><div class="a tl" id="tm11" style="left:1061px">22 Sep 07:30</div>
<div class="a tt" style="left:1157px"></div><div class="a tl" id="tm12" style="left:1157px">22 Sep 19:30</div>
<div class="a tt" style="left:1253px"></div><div class="a tl" id="tm13" style="left:1253px">23 Sep 07:30</div>
<div class="a tt" style="left:1349px"></div><div class="a tl" id="tm14" style="left:1349px">23 Sep 19:30</div>
<div class="a tt" style="left:1445px"></div><div class="a tl" id="tm15" style="left:1445px">24 Sep 07:30</div>


<!-- terminal -->
<svg class="a" style="left:4px;top:850px" width="12" height="12" fill="none" stroke="#000" stroke-width="1.6"><path d="M2.3 3.3L9.7 9.7M9.7 3.3L2.3 9.7"/></svg>
<div class="a" style="left:3px;top:868px;width:16px;height:116px;background:linear-gradient(#b7cfec,#9ab4d8)"></div>
<div class="a" id="tv" style="left:12.7px;top:981.2px;font-size:15.2px;line-height:16px;height:16px;color:#000;transform-origin:0 0;transform:rotate(-90deg) translate(0,-8px) scaleX(.915)">Terminal</div>
<div class="a" id="term"></div>
<div class="a" style="left:20px;top:956px;width:1px;height:27px;background:#a0a0a0"></div>
<div class="a" style="left:220px;top:852px;width:1px;height:25px;background:#e2e2e2"></div>
<div class="a" style="left:21px;top:877px;width:1872px;height:1px;background:#d4d4d4"></div>
<div class="a trow" style="top:877px;height:25px;background:#ececec;border-top:1px solid #d0d0d0"></div>
<div class="a trow" style="top:902px;height:25px;background:#fff"></div>
<div class="a trow" style="top:927px;height:25px;background:#ececec"></div>
<div class="a" style="left:219px;top:878px;width:1px;height:78px;background:#c8c8c8"></div>
<div class="a" style="left:1894px;top:851px;width:21px;height:105px;background:#f0f0f0"></div>
<div class="a" style="left:1902px;top:872px;width:3px;height:21px;background:#8b8b8b;border-radius:2px"></div>
<div class="a tx" id="th1" style="left:27px;top:852px;line-height:25px">Time</div>
<div class="a tx" id="th2" style="left:227px;top:852px;line-height:25px">Message</div>
<div class="a" style="left:28px;top:884px;width:9px;height:9px;border-radius:50%;border:1.3px solid #888;background:radial-gradient(circle at 32% 28%,#f0f0f0 0,#cacaca 38%,#b6b6b6 100%)"></div>
<div class="a" style="left:28px;top:909px;width:9px;height:9px;border-radius:50%;border:1.3px solid #888;background:radial-gradient(circle at 32% 28%,#f0f0f0 0,#cacaca 38%,#b6b6b6 100%)"></div>
<div class="a" style="left:28px;top:934px;width:9px;height:9px;border-radius:50%;border:1.3px solid #888;background:radial-gradient(circle at 32% 28%,#f0f0f0 0,#cacaca 38%,#b6b6b6 100%)"></div>
<div class="a tx" id="r1a" style="left:48px;top:877.3px">2025.09.24 06:04:36.884</div>
<div class="a tx" id="r1b0" style="left:226px;top:877.3px">Forex_TriStar_Robot_EURGBP</div><div class="a tx" id="r1b1" style="left:422px;top:877.3px">EURGBP,M15:</div><div class="a tx" id="r1b2" style="left:515px;top:877.3px">initialized</div>
<div class="a tx" id="r2a" style="left:48px;top:902.3px">2025.09.24 06:04:36.862</div>
<div class="a tx" id="r2b0" style="left:226px;top:902.3px">Forex_TriStar_Robot_EURGBP</div><div class="a tx" id="r2b1" style="left:421px;top:902.3px">EURGBP,M15</div><div class="a tx" id="r2b2" style="left:512px;top:902.3px">inputs:</div><div class="a tx" id="r2b3" style="left:559px;top:902.3px">MaxSpread=2.5;</div><div class="a tx" id="r2b4" style="left:670px;top:902.3px">StartTrading=0;</div><div class="a tx" id="r2b5" style="left:776px;top:902.3px">EndTrading=23;</div><div class="a tx" id="r2b6" style="left:883px;top:902.3px">Lot=0.1;</div><div class="a tx" id="r2b7" style="left:940px;top:902.3px">TP=50;</div><div class="a tx" id="r2b8" style="left:989px;top:902.3px">SL=70;</div><div class="a tx" id="r2b9" style="left:1037px;top:902.3px">SafeFridays=false;</div><div class="a tx" id="r2b10" style="left:1161px;top:902.3px">Hedging=true;</div><div class="a tx" id="r2b11" style="left:1261px;top:902.3px">SL_Fix=1;</div><div class="a tx" id="r2b12" style="left:1325px;top:902.3px">SL_Delta=19;</div>
<div class="a tx" id="r3a" style="left:48px;top:927.3px">2025.09.24 06:04:31.826</div>
<div class="a tx" id="r3b0" style="left:226px;top:927.3px">Expert</div><div class="a tx" id="r3b1" style="left:272px;top:927.3px">Forex_TriStar_Robot_EURGBP</div><div class="a tx" id="r3b2" style="left:467px;top:927.3px">EURGBP,M15:</div><div class="a tx" id="r3b3" style="left:560px;top:927.3px">loaded</div><div class="a tx" id="r3b4" style="left:611px;top:927.3px">successfully</div>
<!-- tab strip -->
<div class="a" style="left:21px;top:956px;width:1893px;height:1px;background:#000"></div>
<div class="a" style="left:778px;top:956px;width:73px;height:25px;background:#f0f0f0;border:1px solid #000;border-top:none;box-shadow:0 0 0 0 #000"></div>
<div class="a" style="left:779px;top:956px;width:71px;height:1px;background:#f0f0f0"></div>
<div class="a tab" id="t1" style="left:36px">Trade</div><div class="a tsep" style="left:86px"></div>
<div class="a tab" id="t2" style="left:99px">Exposure</div><div class="a tsep" style="left:171px"></div>
<div class="a tab" id="t3" style="left:184px">Account History</div><div class="a tsep" style="left:301px"></div>
<div class="a tab" id="t4" style="left:314px">News</div><div class="a tsep" style="left:362px"></div>
<div class="a tab" id="t5" style="left:375px">Alerts</div><div class="a tsep" style="left:425px"></div>
<div class="a tab" id="t6" style="left:438px">Mailbox</div><div class="a" id="t6n" style="left:495px;top:967px;font-size:12.5px;font-weight:bold;color:#e02020;line-height:12px">6</div><div class="a tsep" style="left:514px"></div>
<div class="a tab" id="t7" style="left:527px">Market</div><div class="a" id="t7n" style="left:577px;top:967px;font-size:12.5px;font-weight:bold;color:#e02020;line-height:12px">133</div><div class="a tsep" style="left:609px"></div>
<div class="a tab" id="t8" style="left:622px">Articles</div><div class="a tsep" style="left:683px"></div>
<div class="a tab" id="t9" style="left:696px">Code Base</div>
<div class="a tab" id="t10" style="left:791px;color:#000">Experts</div>
<div class="a tab" id="t11" style="left:864px">Journal</div><div class="a tsep" style="left:923px"></div>
<div class="a" style="left:20px;top:983px;width:1896px;height:1px;background:#fff"></div>
<div class="a" style="left:1915px;top:850px;width:1px;height:134px;background:#fff"></div>
<div class="a" style="left:0;top:844px;width:1920px;height:2px;background:#fff"></div>
<div class="a" style="left:1918px;top:26px;width:2px;height:820px;background:#fff"></div>
<div class="a" style="left:20px;top:849px;width:1895px;height:1px;background:#f7f7f7"></div>

<!-- dialog -->
<div class="a" id="dlg">
<div class="a" id="dlgtitle"></div>
<div class="a dt" id="d0a" style="left:9px;top:10.5px;font-size:15.3px">Expert</div><div class="a dt" id="d0b" style="left:56px;top:10.5px;font-size:15.3px">-</div><div class="a dt" id="d0c" style="left:65px;top:10.5px;font-size:15.3px">Forex_TriStar_Robot_EURGBP</div>
<div class="a" style="left:710.5px;top:8px;font-size:15px;line-height:20px;color:#000" id="dq">?</div>
<svg class="a" style="left:764px;top:11px" width="16" height="16" fill="none" stroke="#000" stroke-width="1.1"><path d="M2 2L14 14M14 2L2 14"/></svg>
<!-- tab panel -->
<div class="a" style="left:8px;top:68px;width:787px;height:301px;background:#f9f9f9;border:1px solid #e5e5e5"></div>
<div class="a dtab" style="left:10px;width:48px"></div>
<div class="a dtab" style="left:57px;width:66px"></div>
<div class="a dtab" style="left:173px;width:98px"></div>
<div class="a dtab" style="left:122px;width:52px;top:45px;height:25px;background:#f9f9f9"></div>
<div class="a rt" id="dt1" style="left:16px;top:49.8px">About</div>
<div class="a rt" id="dt2" style="left:64px;top:49.8px">Common</div>
<div class="a rt" id="dt3" style="left:130px;top:48.3px">Inputs</div>
<div class="a rt" id="dt4" style="left:178px;top:49.8px">Dependencies</div>
<!-- listbox -->
<div class="a" style="left:20px;top:78px;width:615px;height:282px;background:#fff;border:1px solid #828790"></div>
<div class="a rt" id="lh1" style="left:28px;top:84.3px">Variable</div>
<div class="a rt" id="lh2" style="left:333px;top:84.3px">Value</div>
<div class="a" style="left:326px;top:80px;width:1px;height:24px;background:#e0e0e0"></div>
<div class="a" style="left:632px;top:80px;width:1px;height:24px;background:#e0e0e0"></div>
<div class="a row" style="top:104px"></div><svg class="a" style="left:22px;top:105px" width="24" height="24"><use href="#ic_h"/></svg><div class="a rt rw" id="rn0" style="left:49px;top:107.9px">MaxSpread</div><div class="a rt rw" id="rv0" style="left:331px;top:107.9px">2.5</div>
<div class="a row rowg" style="top:129px"></div><svg class="a" style="left:22px;top:130px" width="24" height="24"><use href="#ic_i"/></svg><div class="a rt rw" id="rn1" style="left:49px;top:132.9px">StartTrading</div><div class="a rt rw" id="rv1" style="left:331px;top:132.9px">0</div>
<div class="a row" style="top:154px"></div><svg class="a" style="left:22px;top:155px" width="24" height="24"><use href="#ic_i"/></svg><div class="a rt rw" id="rn2" style="left:49px;top:157.9px">EndTrading</div><div class="a rt rw" id="rv2" style="left:331px;top:157.9px">23</div>
<div class="a row rowg" style="top:179px"></div><svg class="a" style="left:22px;top:180px" width="24" height="24"><use href="#ic_h"/></svg><div class="a rt rw" id="rn3" style="left:49px;top:182.9px">Lot</div><div class="a rt rw" id="rv3" style="left:331px;top:182.9px">0.1</div>
<div class="a row" style="top:204px"></div><svg class="a" style="left:22px;top:205px" width="24" height="24"><use href="#ic_i"/></svg><div class="a rt rw" id="rn4" style="left:49px;top:207.9px">TP</div><div class="a rt rw" id="rv4" style="left:331px;top:207.9px">manual_50_pips</div>
<div class="a row rowg" style="top:229px"></div><svg class="a" style="left:22px;top:230px" width="24" height="24"><use href="#ic_i"/></svg><div class="a rt rw" id="rn5" style="left:49px;top:232.9px">SL</div><div class="a rt rw" id="rv5" style="left:331px;top:232.9px">manual_70_pips</div>
<div class="a row" style="top:254px"></div><svg class="a" style="left:22px;top:255px" width="24" height="24"><use href="#ic_b"/></svg><div class="a rt rw" id="rn6" style="left:49px;top:257.9px">SafeFridays</div><div class="a rt rw" id="rv6" style="left:331px;top:257.9px">false</div>
<div class="a row rowg" style="top:279px"></div><svg class="a" style="left:22px;top:280px" width="24" height="24"><use href="#ic_b"/></svg><div class="a rt rw" id="rn7" style="left:49px;top:282.9px">Hedging</div><div class="a rt rw" id="rv7" style="left:331px;top:282.9px">true</div>
<div class="a row" style="top:304px"></div><svg class="a" style="left:22px;top:305px" width="24" height="24"><use href="#ic_i"/></svg><div class="a rt rw" id="rn8" style="left:49px;top:307.9px">SL_Fix</div><div class="a rt rw" id="rv8" style="left:331px;top:307.9px">1</div>
<div class="a row rowg" style="top:329px"></div><svg class="a" style="left:22px;top:330px" width="24" height="24"><use href="#ic_i"/></svg><div class="a rt rw" id="rn9" style="left:49px;top:332.9px">SL_Delta</div><div class="a rt rw" id="rv9" style="left:331px;top:332.9px">19</div>

<div class="a" style="left:326px;top:104px;width:1px;height:250px;background:#c4c4c4"></div>
<div class="a btn" style="left:646px;top:291px;width:138px"></div>
<div class="a btn" style="left:646px;top:331px;width:138px"></div>
<div class="a btn" style="left:477px;top:377px;width:98px;border:1px solid #0067c0;box-shadow:inset 0 0 0 .6px #0067c0"></div>
<div class="a btn" style="left:585px;top:377px;width:98px"></div>
<div class="a btn" style="left:693px;top:377px;width:98px"></div>
<div class="a rt" id="b1" style="left:699px;top:296.2px">Load</div>
<div class="a rt" id="b2" style="left:699px;top:336px">Save</div>
<div class="a rt" id="b3" style="left:517px;top:381.9px">OK</div>
<div class="a rt" id="b4" style="left:613px;top:381.9px">Cancel</div>
<div class="a rt" id="b5" style="left:724px;top:381.9px">Reset</div>
<svg class="a" style="left:791px;top:404px" width="9" height="9" fill="#c2c2c2"><rect x="1" y="1" width="3" height="3" fill="#dcdcdc"/><rect x="5" y="1" width="3" height="3"/><rect x="1" y="5" width="3" height="3"/><rect x="5" y="5" width="3" height="3"/></svg>
<div class="a" style="left:0;top:0;width:802px;height:414px;border:1px solid #fcfcfc;border-radius:8px"></div>
</div>
</body></html>
